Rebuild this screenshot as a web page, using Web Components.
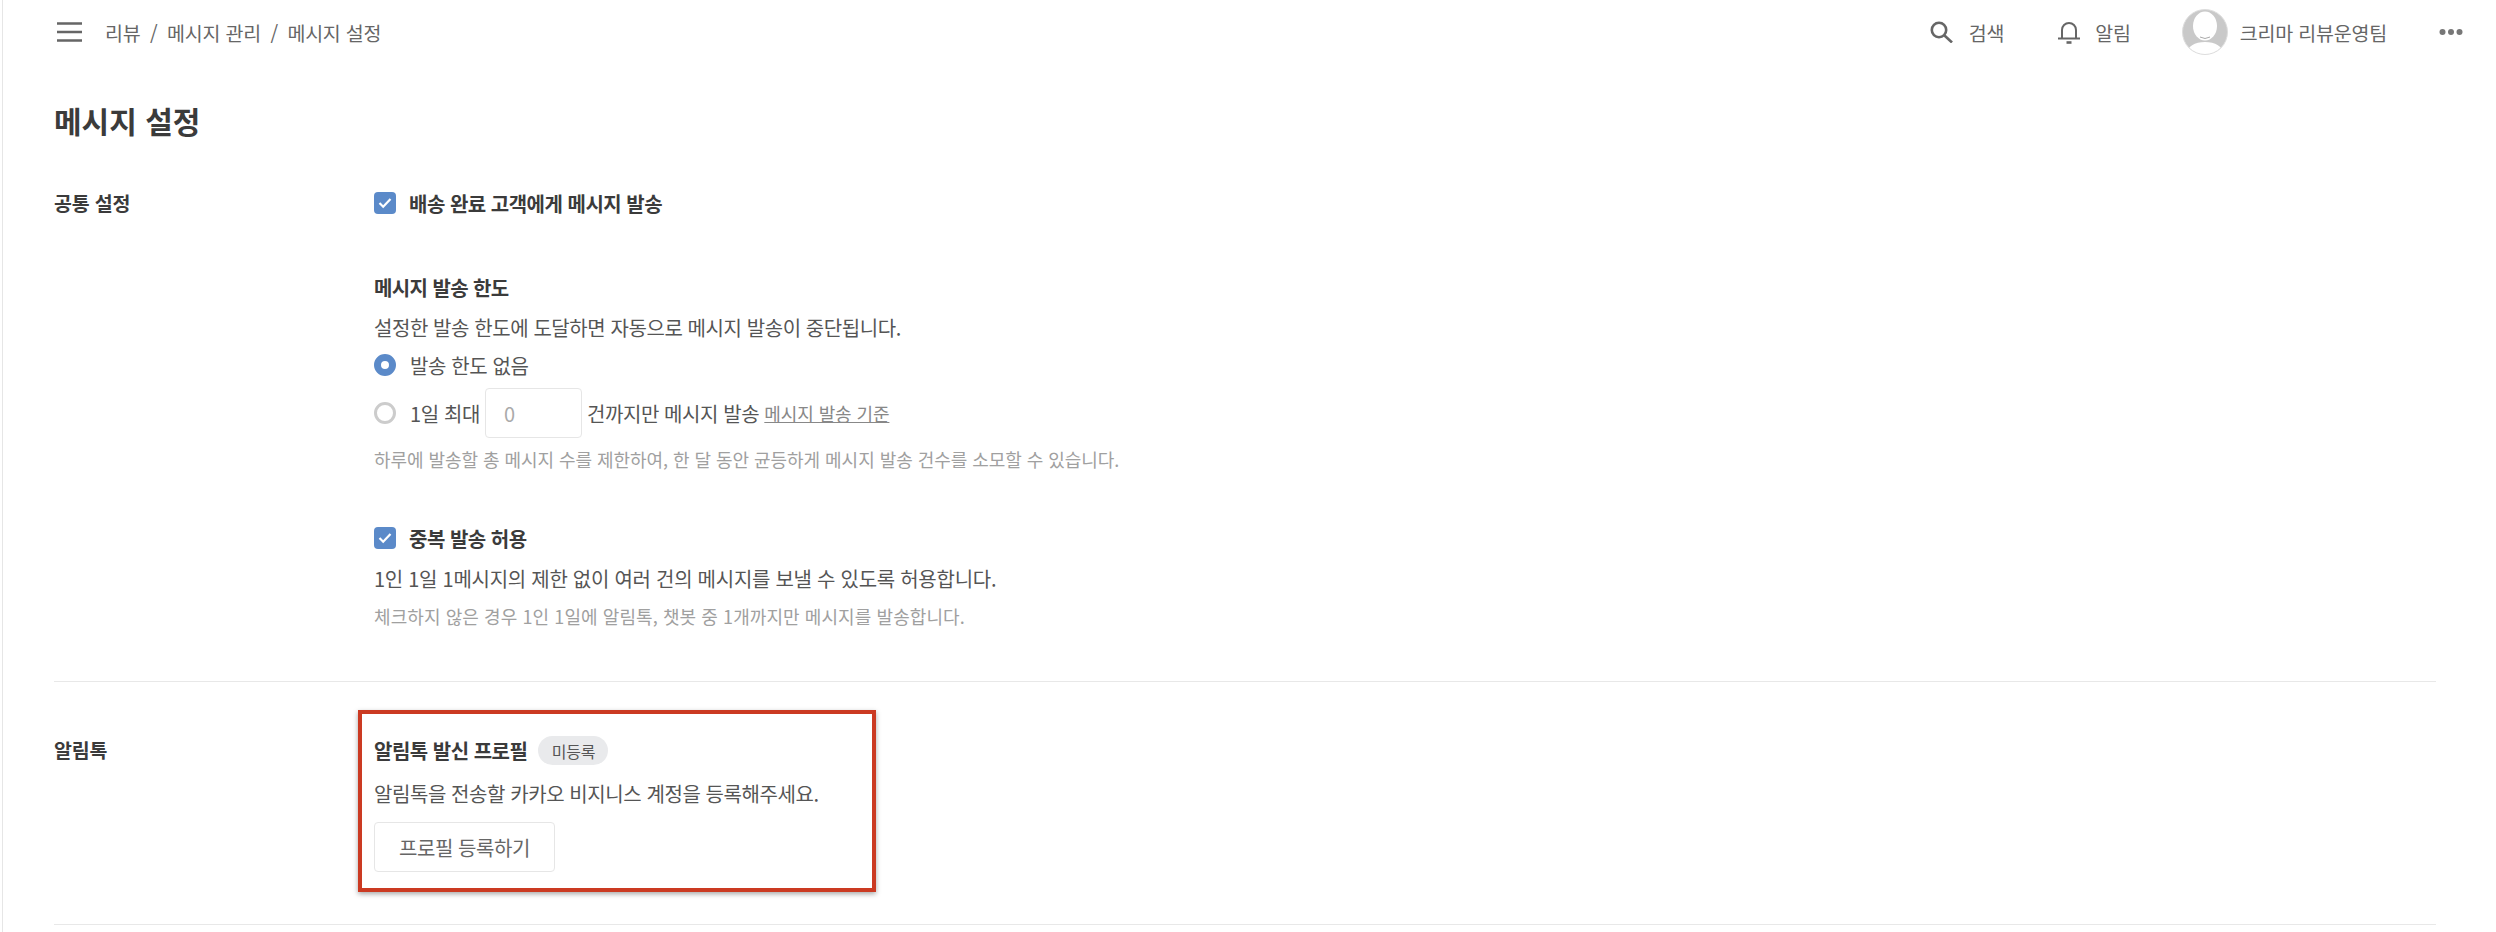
<!DOCTYPE html>
<html lang="ko"><head><meta charset="utf-8"><title>메시지 설정</title>
<style>
html,body{margin:0;height:932px;overflow:hidden;background:#fff}
body{font-family:"Noto Sans CJK KR","Noto Sans",sans-serif;color:#555;font-size:20px;letter-spacing:-.4px}
</style></head><body>
<template id="t-app"><style>
:host{display:block;height:932px;box-sizing:border-box;margin-left:2px;border-left:1px solid #e6e6e6;overflow:hidden;position:relative}
main{padding:0 60px 0 51px}
h1{margin:34px 0 0;height:44px;font-size:30px;line-height:44px;font-weight:700;color:#3b3b3b;letter-spacing:0}
</style><slot name="header"></slot><main><h1>메시지 설정</h1><slot></slot></main></template>

<template id="t-header"><style>
:host{display:flex;align-items:center;height:64px;padding:0 33px 0 54px;color:#666;font-size:19.500px;letter-spacing:-.2px}
.crumb{margin-left:22px;display:flex;gap:9.500px;white-space:nowrap}
.sp{flex:1}
.item{display:flex;align-items:center;gap:16px;white-space:nowrap}
svg{display:block;flex:none}
</style>
<svg width="26" height="20" viewBox="0 0 26 20" fill="none" stroke="#666" stroke-width="2.4"><path d="M0 1.5H25M0 10H25M0 18.500H25"/></svg>
<div class="crumb"><span>리뷰</span><span>/</span><span>메시지 관리</span><span>/</span><span>메시지 설정</span></div>
<div class="sp"></div>
<div class="item"><svg width="23" height="22" viewBox="0 0 23 22" fill="none" stroke="#666" stroke-width="2.6"><circle cx="9" cy="9" r="7.200"/><path d="M14.500 14.500L22 21.500"/></svg><span>검색</span></div>
<div class="item" style="margin-left:53px;gap:14px"><svg width="24" height="24" viewBox="0 0 24 24" fill="none" stroke="#666" stroke-width="2"><path d="M5 18V10a7 7 0 0 1 14 0v8"/><path d="M1 18.500H23"/><path d="M9.500 22.500h5" stroke-width="2.600"/></svg><span>알림</span></div>
<div class="item" style="margin-left:51px;gap:12px"><svg width="46" height="46" viewBox="0 0 46 46"><defs><clipPath id="c"><circle cx="23" cy="23" r="22.500"/></clipPath></defs><circle cx="23" cy="23" r="22.500" fill="#c9c9c9"/><g clip-path="url(#c)" fill="#fff"><ellipse cx="23" cy="17" rx="12" ry="14.500"/><path d="M4 46c1-9 9-13 19-13s18 4 19 13z"/></g><path d="M18 28q5 3 10 0" fill="none" stroke="#aaa" stroke-width="1"/><circle cx="23" cy="23" r="22.500" fill="none" stroke="#ddd"/></svg><span>크리마 리뷰운영팀</span></div>
<svg style="margin-left:52px" width="24" height="8" viewBox="0 0 24 8" fill="#777"><circle cx="3.500" cy="4" r="3"/><circle cx="12" cy="4" r="3"/><circle cx="20.500" cy="4" r="3"/></svg>
</template>

<template id="t-section"><style>
:host{display:grid;grid-template-columns:320px 1fr;border-bottom:1px solid #e8e8e8}
.l{font-weight:700;color:#3b3b3b;font-size:19.500px;line-height:28px;letter-spacing:-.2px}
</style><div class="l"><slot name="label"></slot></div><div><slot></slot></div></template>

<template id="t-check"><style>
:host{display:flex;align-items:center;gap:13px;height:28px;font-weight:700;color:#3b3b3b;letter-spacing:-.5px}
i{width:22px;height:22px;border-radius:4px;background:#5b8ac9;display:flex;align-items:center;justify-content:center}
</style><i><svg width="14" height="12" viewBox="0 0 14 12" fill="none" stroke="#fff" stroke-width="2.200"><path d="M1.500 6l3.700 3.700L12.500 2"/></svg></i><span><slot></slot></span></template>

<template id="t-radio"><style>
:host{display:flex;align-items:center;gap:14px;color:#555;white-space:nowrap}
i{box-sizing:border-box;width:22px;height:22px;border-radius:50%;border:3px solid #ccc;flex:none}
:host([on]) i{border:7.500px solid #5b8ac9}
</style><i></i><span style="display:flex;align-items:center;gap:5px"><slot></slot></span></template>

<template id="t-input"><style>
:host{display:flex;align-items:center;box-sizing:border-box;width:97px;height:50px;border:1px solid #e6e6e6;border-radius:4px;padding-left:18px;color:#aaa}
</style><slot></slot></template>

<template id="t-badge"><style>
:host{display:inline-flex;align-items:center;justify-content:center;height:29px;width:70px;border-radius:15px;background:#e9eaec;color:#555;font-size:16px;font-weight:400;letter-spacing:-.2px}
</style><slot></slot></template>

<template id="t-button"><style>
:host{display:flex;align-items:center;justify-content:center;box-sizing:border-box;width:181px;height:50px;border:1px solid #e6e6e6;border-radius:4px;color:#666}
</style><slot></slot></template>

<template id="t-note"><style>
:host{display:block;position:absolute;left:358px;top:710px;width:518px;height:182px;box-sizing:border-box;border:4.500px solid #cb3a22;box-shadow:0 2px 5px rgba(0,0,0,.35);pointer-events:none}
</style></template>

<x-app>
<x-header slot="header"></x-header>
<x-section style="height:540px;padding-top:35px;box-sizing:border-box">
  <span slot="label" style="display:block;margin-top:12px">공통 설정</span>
  <x-check style="margin-top:12px">배송 완료 고객에게 메시지 발송</x-check>
  <div style="margin-top:57px;font-weight:700;color:#3b3b3b;line-height:28px;letter-spacing:-.6px">메시지 발송 한도</div>
  <div style="margin-top:12px;line-height:28px;letter-spacing:-.42px">설정한 발송 한도에 도달하면 자동으로 메시지 발송이 중단됩니다.</div>
  <x-radio on style="margin-top:9px;height:28px">발송 한도 없음</x-radio>
  <x-radio style="margin-top:9px;height:50px"><span>1일 최대</span><x-input>0</x-input><span>건까지만 메시지 발송</span><span style="color:#888;text-decoration:underline;font-size:18px;letter-spacing:-.1px">메시지 발송 기준</span></x-radio>
  <div style="margin-top:7px;line-height:28px;color:#a0a0a0;font-size:18px;letter-spacing:-.05px">하루에 발송할 총 메시지 수를 제한하여, 한 달 동안 균등하게 메시지 발송 건수를 소모할 수 있습니다.</div>
  <x-check style="margin-top:51px">중복 발송 허용</x-check>
  <div style="margin-top:13px;line-height:28px;letter-spacing:-.27px">1인 1일 1메시지의 제한 없이 여러 건의 메시지를 보낼 수 있도록 허용합니다.</div>
  <div style="margin-top:9px;line-height:28px;color:#a0a0a0;font-size:18px;letter-spacing:.08px">체크하지 않은 경우 1인 1일에 알림톡, 챗봇 중 1개까지만 메시지를 발송합니다.</div>
</x-section>
<x-section style="height:243px;box-sizing:border-box;padding-top:54px">
  <span slot="label" style="display:block">알림톡</span>
  <div style="display:flex;align-items:center;gap:11px;height:29px;font-weight:700;color:#3b3b3b;letter-spacing:-.5px"><span>알림톡 발신 프로필</span><x-badge>미등록</x-badge></div>
  <div style="margin-top:15px;line-height:28px;letter-spacing:-.42px">알림톡을 전송할 카카오 비지니스 계정을 등록해주세요.</div>
  <x-button style="margin-top:14px">프로필 등록하기</x-button>
</x-section>
</x-app>
<x-note></x-note>
<script>
const map={'x-app':'t-app','x-header':'t-header','x-section':'t-section','x-check':'t-check','x-radio':'t-radio','x-input':'t-input','x-badge':'t-badge','x-button':'t-button','x-note':'t-note'};
for(const [n,id] of Object.entries(map)){
  customElements.define(n,class extends HTMLElement{constructor(){super();this.attachShadow({mode:'open'}).appendChild(document.getElementById(id).content.cloneNode(true));}});
}
</script>
</body></html>
